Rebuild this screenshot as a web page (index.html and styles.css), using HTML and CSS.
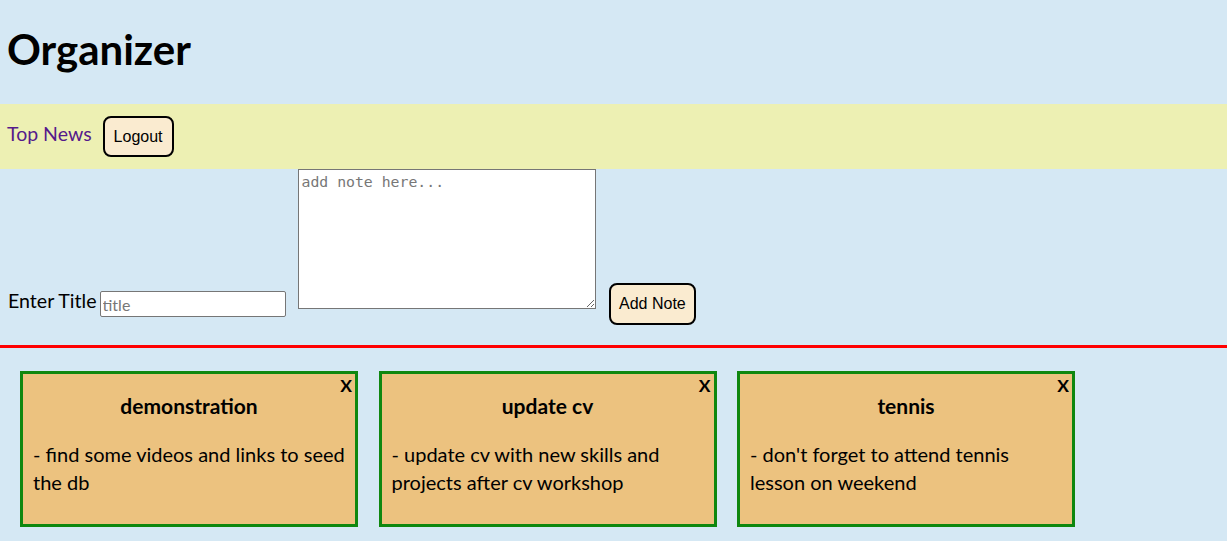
FILE: index.html
```html
<!DOCTYPE html>
<html>
<head>
<meta charset="utf-8">
<title>Organizer</title>
<link rel="stylesheet" href="styles.css">
</head>
<body>
<header class="header">
  <h1 class="title">Organizer</h1>
</header>
<nav class="nav">
  <a class="nav-link" href="#">Top News</a>
  <button class="btn">Logout</button>
</nav>
<form class="note-form">
  <label class="label" for="t">Enter Title</label>
  <input class="title-input" id="t" type="text" placeholder="title">
  <textarea class="note-area" placeholder="add note here..."></textarea>
  <button class="btn btn-add" type="button">Add Note</button>
</form>
<section class="notes">
  <div class="card">
    <span class="close">X</span>
    <h3 class="card-title">demonstration</h3>
    <p class="card-text">- find some videos and links to seed the db</p>
  </div>
  <div class="card">
    <span class="close">X</span>
    <h3 class="card-title">update cv</h3>
    <p class="card-text">- update cv with new skills and projects after cv workshop</p>
  </div>
  <div class="card">
    <span class="close">X</span>
    <h3 class="card-title">tennis</h3>
    <p class="card-text">- don't forget to attend tennis lesson on weekend</p>
  </div>
</section>
</body>
</html>
```
FILE: styles.css
```css
body {
  margin: 0;
  background: #d5e8f4;
  font-family: Lato, "Noto Sans", sans-serif;
  color: #000;
}
.header {
  box-sizing: border-box;
  height: 104px;
  display: flex;
  align-items: center;
  padding: 0 0 6px 7px;
}
.title {
  margin: 0;
  font-size: 42px;
  line-height: 40px;
  font-weight: 700;
}
.nav {
  height: 65px;
  background: #edf0b3;
  display: flex;
  align-items: center;
  padding-left: 7px;
  gap: 11px;
}
.nav-link {
  color: #551a8b;
  text-decoration: none;
  font-size: 19.5px;
  margin-bottom: 6px;
}
.btn {
  font-family: "Liberation Sans", Arial, sans-serif;
  font-size: 16px;
  background: #faebd0;
  border: 2px solid #000;
  border-radius: 8px;
  padding: 0 9px;
  height: 41px;
  color: #000;
}
.btn-add {
  height: 42px;
  padding: 0 8.5px;
  margin-left: 13px;
}
.note-form {
  display: flex;
  align-items: flex-end;
  padding: 0 0 20px 8px;
  border-bottom: 3px solid #ff0000;
}
.label {
  font-size: 19.6px;
  line-height: 24px;
  margin-bottom: 12px;
}
.title-input {
  box-sizing: border-box;
  width: 186px;
  height: 26px;
  margin: 0 0 8px 3px;
  border: 1px solid #767676;
  border-radius: 2px;
  padding: 1px 2px;
  font-family: Lato, sans-serif;
  font-size: 16px;
}
.note-area {
  box-sizing: border-box;
  width: 298px;
  height: 140px;
  margin: 0 0 16px 12px;
  border: 1px solid #767676;
  padding: 3px 3px;
  font-family: "DejaVu Sans Mono", monospace;
  font-size: 14.8px;
  resize: both;
}
.note-area::placeholder,
.title-input::placeholder {
  color: #777;
}
.notes {
  display: flex;
  gap: 20.5px;
  padding: 23px 0 0 20px;
}
.card {
  position: relative;
  box-sizing: border-box;
  width: 338px;
  height: 156px;
  border: 3px solid #0f870f;
  background: #ecc27f;
  padding: 0 10px;
}
.close {
  position: absolute;
  top: 3px;
  right: 3px;
  font-weight: 700;
  font-size: 17.5px;
  line-height: 18px;
}
.card-title {
  margin: 18px 0 0;
  text-align: center;
  font-size: 21px;
  line-height: 28px;
  font-weight: 700;
}
.card-text {
  margin: 20px 0 0;
  font-size: 20px;
  line-height: 28px;
}
```
